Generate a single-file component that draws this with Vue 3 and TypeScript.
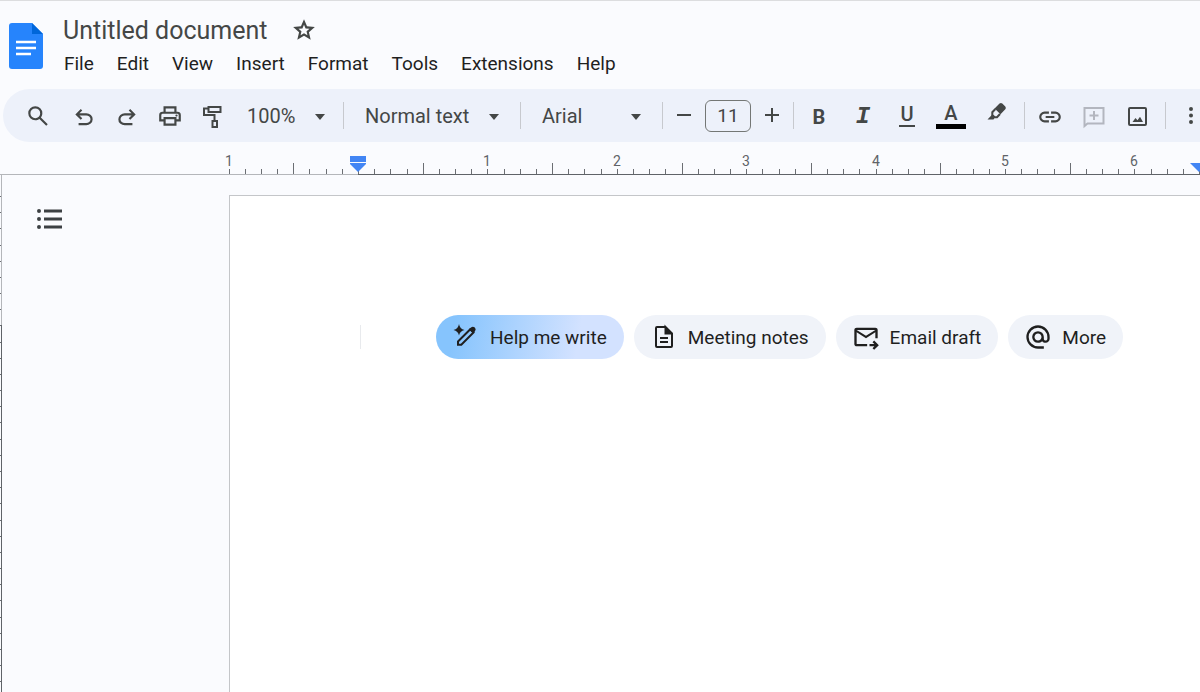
<script setup lang="ts">
import { h, ref } from 'vue'
import type { FunctionalComponent } from 'vue'

interface Shape {
  d: string
  stroke?: number
}
interface Glyph {
  box: string
  shapes: Shape[]
}

const SYMBOL = '0 -960 960 960'
const PX = '0 0 26 26'
const symbol = (d: string): Glyph => ({ box: SYMBOL, shapes: [{ d }] })

const glyphs: Record<string, Glyph> = {
  star: symbol('m354-287 126-76 126 77-33-144 111-96-146-13-58-136-58 135-146 13 111 97-33 143ZM233-120l65-281L80-590l288-25 112-265 112 265 288 25-218 189 65 281-247-149-247 149Z'),
  search: symbol('M784-120 532-372q-30 24-69 38t-83 14q-109 0-184.5-75.5T120-580q0-109 75.5-184.5T380-840q109 0 184.5 75.5T640-580q0 44-14 83t-38 69l252 252-56 56ZM380-400q75 0 127.5-52.5T560-580q0-75-52.5-127.5T380-760q-75 0-127.5 52.5T200-580q0 75 52.5 127.5T380-400Z'),
  undo: symbol('M280-140v-80h284q63 0 109.5-40T720-360q0-60-46.5-100T564-500H312l104 104-56 56-200-200 200-200 56 56-104 104h252q97 0 169.5 63T800-360q0 94-72.5 157T564-140H280Z'),
  redo: symbol('M396-140q-97 0-169.5-63T160-360q0-94 72.5-157T396-580h252L544-684l56-56 200 200-200 200-56-56 104-104H396q-63 0-109.5 40T240-360q0 60 46.5 100T396-220h284v80H396Z'),
  print: symbol('M640-640v-120H320v120h-80v-200h480v200h-80Zm80 180q17 0 28.5-11.5T760-500q0-17-11.5-28.5T720-540q-17 0-28.5 11.5T680-500q0 17 11.5 28.5T720-460Zm-80 260v-160H320v160h320Zm80 80H240v-160H80v-240q0-51 35-85.5t85-34.5h560q51 0 85.5 34.5T880-520v240H720v160Zm80-240v-160q0-17-11.5-28.5T760-560H200q-17 0-28.5 11.5T160-520v160h80v-80h480v80h80Z'),
  roller: {
    box: PX,
    shapes: [
      { d: 'M8.500 4H20.500V9H8.500ZM8.500 5.500H4V12H14.500V17.500M12.500 18H17V24H12.500Z', stroke: 2 },
    ],
  },
  marker: {
    box: PX,
    shapes: [
      { d: 'M15.5 1.5Q17 .3 18.3 1.5L21.3 4.5Q22.5 6 21.3 7.3L16.5 12.2L10.6 6.4ZM3.5 17.5L8 12.8L10.8 15.6L9.5 17.5Z' },
      { d: 'M11.4 7L8.3 10.2V13L10.6 15.2H13L16 12', stroke: 2 },
    ],
  },
  link: symbol('M440-280H280q-83 0-141.5-58.5T80-480q0-83 58.5-141.5T280-680h160v80H280q-50 0-85 35t-35 85q0 50 35 85t85 35h160v80ZM320-440v-80h320v80H320Zm200 160v-80h160q50 0 85-35t35-85q0-50-35-85t-85-35H520v-80h160q83 0 141.5 58.5T880-480q0 83-58.5 141.5T680-280H520Z'),
  comment: {
    box: PX,
    shapes: [
      { d: 'M3.500 22V4H22.500V19.500H6.500ZM13 7V16M8.500 11.500H17.500', stroke: 2 },
    ],
  },
  image: {
    box: PX,
    shapes: [
      { d: 'M5 4H20Q21 4 21 5V20Q21 21 20 21H5Q4 21 4 20V5Q4 4 5 4Z', stroke: 2 },
      { d: 'M7.500 18L10.500 14L12.500 16.300L15 12.800L18 18Z' },
    ],
  },
  dots: {
    box: PX,
    shapes: [{ d: 'M11 6a2 2 0 1 0 4 0a2 2 0 1 0-4 0M11 12.500a2 2 0 1 0 4 0a2 2 0 1 0-4 0M11 19a2 2 0 1 0 4 0a2 2 0 1 0-4 0' }],
  },
  minus: { box: PX, shapes: [{ d: 'M6 12H20', stroke: 2 }] },
  plus: { box: PX, shapes: [{ d: 'M6 12H20M13 5V19', stroke: 2 }] },
  list: {
    box: PX,
    shapes: [
      { d: 'M7 5H25M7 13H25M7 21H25', stroke: 3 },
      { d: 'M0 5a2 2 0 1 0 4 0a2 2 0 1 0-4 0M0 13a2 2 0 1 0 4 0a2 2 0 1 0-4 0M0 21a2 2 0 1 0 4 0a2 2 0 1 0-4 0' },
    ],
  },
  write: {
    box: '-2 -1 28 28',
    shapes: [
      { d: 'M5 0Q5.800 5 10.500 6Q5.800 7 5 11.500Q4.200 7 -.5 6Q4.200 5 5 0Z' },
      { d: 'M17 3.500Q18.800 2 20.800 3.500Q22.500 5.300 21 7.300L19 9.300L14.800 5.300Z' },
      { d: 'M16.300 5.300L4 17.500V20.800H7.300L19.500 8.500Z', stroke: 2 },
    ],
  },
  notes: {
    box: '-2 -2 28 28',
    shapes: [
      { d: 'M13.500 2H5Q4 2 4 3V21Q4 22 5 22H19Q20 22 20 21V8.500L13.500 2V8.500H20M8 13H16M8 17H16', stroke: 2 },
      { d: 'M13.500 1.500L20.500 9H13.500Z' },
    ],
  },
  mail: symbol('M160-160q-33 0-56.500-23.500T80-240v-480q0-33 23.500-56.500T160-800h640q33 0 56.500 23.500T880-720v280h-80v-200L480-440 160-640v400h360v80H160Zm320-360 320-200H160l320 200ZM760-40l-56-56 63-64H600v-80h167l-64-64 57-56 160 160L760-40Z'),
  at: symbol('M480-80q-83 0-156-31.500T197-197q-54-54-85.500-127T80-480q0-83 31.500-156T197-763q54-54 127-85.500T480-880q83 0 156 31.500T763-763q54 54 85.500 127T880-480v58q0 59-40.500 100.500T740-280q-35 0-66-15t-52-43q-29 29-65.500 43.500T480-280q-83 0-141.500-58.500T280-480q0-83 58.500-141.500T480-680q83 0 141.500 58.500T680-480v58q0 26 17 44t43 18q26 0 43-18t17-44v-58q0-134-93-227t-227-93q-134 0-227 93t-93 227q0 134 93 227t227 93h200v80H480Zm0-280q50 0 85-35t35-85q0-50-35-85t-85-35q-50 0-85 35t-35 85q0 50 35 85t85 35Z'),
}

const Icon: FunctionalComponent<{ name: string }> = (props) => {
  const glyph = glyphs[props.name]
  return h(
    'svg',
    { viewBox: glyph.box, 'aria-hidden': 'true' },
    glyph.shapes.map((s) =>
      h('path', {
        d: s.d,
        fill: s.stroke ? 'none' : 'currentColor',
        stroke: s.stroke ? 'currentColor' : 'none',
        'stroke-width': s.stroke,
      }),
    ),
  )
}
Icon.props = ['name']

const menus = ['File', 'Edit', 'View', 'Insert', 'Format', 'Tools', 'Extensions', 'Help']

const historyTools = [
  { icon: 'undo', label: 'Undo' },
  { icon: 'redo', label: 'Redo' },
  { icon: 'print', label: 'Print' },
  { icon: 'roller', label: 'Paint format' },
]
const insertTools = [
  { icon: 'link', label: 'Insert link' },
  { icon: 'comment', label: 'Add comment' },
  { icon: 'image', label: 'Insert image' },
]
const chips = [
  { icon: 'write', label: 'Help me write', accent: true },
  { icon: 'notes', label: 'Meeting notes' },
  { icon: 'mail', label: 'Email draft' },
  { icon: 'at', label: 'More' },
]

const title = ref('Untitled document')
const zoomLevel = ref('100%')
const textStyle = ref('Normal text')
const fontFamily = ref('Arial')
const fontSize = ref('11')

// One inch on the rulers, split in eighths, measured from the left margin.
const INCH = 129.4
const ORIGIN = 358
const ticks = Array.from({ length: 140 }, (_, i) => {
  const n = i - 8
  return { x: Math.round(ORIGIN + (n * INCH) / 8), tall: Math.abs(n % 8) === 4 }
})
const inches = [-1, 1, 2, 3, 4, 5, 6].map((n) => ({
  x: Math.round(ORIGIN + n * INCH),
  text: String(Math.abs(n)),
}))
const rightMargin = Math.round(ORIGIN + 6.5 * INCH)
const sideTicks = Array.from({ length: 90 }, (_, i) => Math.round(21 + (i * INCH) / 8))
</script>

<template>
  <div class="app">
    <header class="header">
      <a class="logo" href="#" aria-label="Docs home">
        <svg viewBox="0 0 34 46" aria-hidden="true">
          <path d="M3 0H23L34 11V43Q34 46 31 46H3Q0 46 0 43V3Q0 0 3 0Z" fill="#2684fc" />
          <path d="M23 0L34 11H23Z" fill="#0066da" />
          <path d="M7 19H27M7 25H27M7 31H22" stroke="#fff" stroke-width="2.500" />
        </svg>
      </a>
      <div class="heading">
        <div class="title-row">
          <input v-model="title" class="title" aria-label="Document title" />
          <button class="star" aria-label="Star"><Icon name="star" /></button>
        </div>
        <nav class="menus">
          <button v-for="m in menus" :key="m" class="menu">{{ m }}</button>
        </nav>
      </div>
    </header>

    <div class="toolbar" role="toolbar" aria-label="Formatting">
      <button class="tool search" aria-label="Search the menus"><Icon name="search" /></button>
      <button v-for="t in historyTools" :key="t.icon" class="tool" :aria-label="t.label">
        <Icon :name="t.icon" />
      </button>
      <div class="pick pick-zoom">
        <select v-model="zoomLevel" aria-label="Zoom"><option>100%</option></select>
      </div>
      <span class="divider"></span>
      <div class="pick pick-style">
        <select v-model="textStyle" aria-label="Styles"><option>Normal text</option></select>
      </div>
      <span class="divider"></span>
      <div class="pick pick-font">
        <select v-model="fontFamily" aria-label="Font"><option>Arial</option></select>
      </div>
      <span class="divider"></span>
      <button class="tool step" aria-label="Decrease font size"><Icon name="minus" /></button>
      <input v-model="fontSize" class="size" aria-label="Font size" />
      <button class="tool step" aria-label="Increase font size"><Icon name="plus" /></button>
      <span class="divider"></span>
      <div class="group">
        <button class="tool letter bold" aria-label="Bold">B</button>
        <button class="tool letter italic" aria-label="Italic">I</button>
        <button class="tool letter" aria-label="Underline"><span class="underlined">U</span></button>
        <button class="tool letter" aria-label="Text color"><span class="colored">A</span></button>
        <button class="tool marker" aria-label="Highlight color"><Icon name="marker" /></button>
      </div>
      <span class="divider"></span>
      <div class="group inserts">
        <button
          v-for="t in insertTools"
          :key="t.icon"
          class="tool"
          :class="t.icon"
          :disabled="t.icon === 'comment'"
          :aria-label="t.label"
        >
          <Icon :name="t.icon" />
        </button>
      </div>
      <span class="divider"></span>
      <div class="group">
        <button class="tool" aria-label="More"><Icon name="dots" /></button>
      </div>
    </div>

    <svg class="ruler" aria-hidden="true">
      <path d="M0 32.500H358" stroke="#b4b6ba" />
      <path d="M358 32.500H6000" stroke="#5f6368" />
      <rect
        v-for="t in ticks"
        :key="t.x"
        :x="t.x"
        :y="t.tall ? 21 : 27"
        width="1"
        :height="t.tall ? 11 : 5"
        fill="#6b6e73"
      />
      <text v-for="n in inches" :key="n.x" :x="n.x" y="24" text-anchor="middle">{{ n.text }}</text>
      <rect x="350" y="14" width="16" height="6" fill="#4285f4" />
      <path d="M350 21H366V22L358 30L350 22Z" fill="#4285f4" />
      <path :d="`M${rightMargin - 9} 21h18l-9 9Z`" fill="#4285f4" />
    </svg>

    <main class="workspace">
      <svg class="side-ruler" aria-hidden="true">
        <path d="M1.500 0V150" stroke="#b4b6ba" />
        <path d="M1.500 150V6000" stroke="#5f6368" />
        <rect v-for="y in sideTicks" :key="y" x="0" :y="y" width="1" height="1" fill="#6b6e73" />
      </svg>
      <aside class="outline">
        <button class="outline-toggle" aria-label="Show outline"><Icon name="list" /></button>
      </aside>
      <section class="page" aria-label="Document">
        <div class="first-line">
          <span class="caret"></span>
          <div class="chips">
            <button v-for="c in chips" :key="c.label" class="chip" :class="{ accent: c.accent }">
              <Icon :name="c.icon" />{{ c.label }}
            </button>
          </div>
        </div>
      </section>
    </main>
  </div>
</template>

<style>
body {
  margin: 0;
  background: #fafbfe;
}
</style>

<style scoped>
.app {
  display: flex;
  flex-direction: column;
  min-height: 100vh;
  box-sizing: border-box;
  overflow: hidden;
  border-top: 1px solid #dcdddf;
  background: #fafbfe;
  color: #1f1f1f;
  font-family: Roboto, "Liberation Sans", sans-serif;
}
button,
input,
select {
  margin: 0;
  padding: 0;
  border: 0;
  background: none;
  color: inherit;
  font: inherit;
}
svg {
  display: block;
  flex: none;
}
.header {
  display: flex;
  gap: 20px;
  height: 88px;
  padding: 0 9px;
  box-sizing: border-box;
}
.logo {
  width: 34px;
  padding-top: 22px;
}
.logo svg {
  width: 34px;
  height: 46px;
}
.heading {
  padding-top: 12px;
}
.title-row {
  display: flex;
  align-items: center;
  gap: 22px;
  height: 34px;
}
.title {
  width: 206px;
  height: 34px;
  color: #444746;
  font-size: 25px;
}
.star {
  color: #444746;
}
.star svg {
  width: 26px;
  height: 26px;
}
.menus {
  display: flex;
  gap: 23px;
  height: 32px;
  padding-left: 1px;
}
.menu {
  font-size: 19px;
  white-space: nowrap;
}
.toolbar {
  display: flex;
  align-items: center;
  flex: none;
  height: 53px;
  margin-left: 3px;
  padding-left: 11px;
  border-radius: 27px 0 0 27px;
  background: #edf1fa;
  color: #444746;
  overflow: hidden;
}
.tool {
  display: flex;
  flex: none;
  align-items: center;
  justify-content: center;
  width: 43px;
  height: 44px;
}
.tool svg {
  width: 26px;
  height: 26px;
}
.search {
  width: 48px;
}
.step {
  width: 42px;
}
.divider {
  flex: none;
  width: 1px;
  height: 27px;
  background: #c7c9ce;
}
.group {
  display: flex;
  flex: none;
  padding: 0 3px;
}
.group .tool {
  width: 44px;
}
.inserts {
  padding-right: 5px;
}
.inserts .tool {
  padding-top: 2px;
}
.pick {
  position: relative;
  flex: none;
}
.pick select {
  width: 100%;
  height: 44px;
  appearance: none;
  font-size: 20px;
}
.pick::after {
  content: "";
  position: absolute;
  top: 20px;
  right: 21px;
  border: 5px solid transparent;
  border-top: 6px solid #444746;
  border-bottom: 0;
  pointer-events: none;
}
.pick-zoom {
  width: 109px;
}
.pick-zoom::after {
  right: 18px;
}
.pick-zoom select {
  padding-left: 13px;
}
.pick-style {
  width: 176px;
}
.pick-style select {
  padding-left: 21px;
}
.pick-font {
  width: 141px;
}
.pick-font select {
  padding-left: 21px;
}
.size {
  flex: none;
  box-sizing: border-box;
  width: 46px;
  height: 32px;
  border: 1px solid #747775;
  border-radius: 6px;
  font-size: 19px;
  text-align: center;
}
.letter {
  font-size: 20px;
  font-weight: 500;
}
.bold {
  padding-top: 2px;
  font-weight: 700;
}
.italic {
  padding-top: 2px;
  font-family: "Liberation Mono", monospace;
  font-style: italic;
  font-weight: 700;
  font-size: 24px;
}
.underlined {
  width: 16px;
  border-bottom: 2px solid #444746;
  line-height: 21px;
}
.colored {
  width: 30px;
  border-bottom: 5px solid #000;
  line-height: 21px;
}
.group .marker {
  width: 48px;
}
.marker svg {
  margin-bottom: 1px;
}
.comment {
  color: #b3b6bf;
}
.ruler {
  width: 100%;
  height: 33px;
}
.ruler text {
  fill: #5f6368;
  font-size: 14px;
}
.workspace {
  display: flex;
  flex: 1;
}
.side-ruler {
  width: 2px;
  height: auto;
}
.outline {
  flex: none;
  width: 227px;
  padding: 31px 0 0 35px;
  box-sizing: border-box;
}
.outline-toggle svg {
  width: 26px;
  height: 26px;
  color: #3c4043;
}
.page {
  flex: 1;
  min-width: 0;
  margin-top: 20px;
  padding: 119px 0 0 130px;
  border: 1px solid #c4c6c9;
  border-right: 0;
  border-bottom: 0;
  background: #fff;
}
.first-line {
  display: flex;
  align-items: center;
  gap: 75px;
}
.caret {
  flex: none;
  width: 1px;
  height: 24px;
  background: #e8eaed;
}
.chips {
  display: flex;
  gap: 10px;
}
.chip {
  display: flex;
  flex: none;
  align-items: center;
  gap: 10px;
  height: 44px;
  padding: 0 17px 0 16px;
  border-radius: 22px;
  background: #f0f3f9;
  font-size: 19px;
  white-space: nowrap;
}
.chip svg {
  width: 28px;
  height: 28px;
}
.accent {
  background: linear-gradient(100deg, #86c4fd 10%, #d3e2ff 75%);
}
</style>
